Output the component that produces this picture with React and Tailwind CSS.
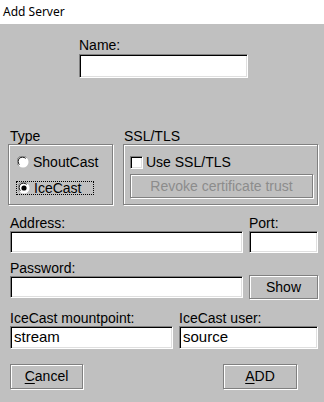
import React from 'react';

const sunken =
  'bg-white border border-t-[#808080] border-l-[#808080] border-r-white border-b-white shadow-[inset_1px_1px_0_#000,inset_-1px_-1px_0_#dfdfdf]';
const etched = 'border border-[#808080] shadow-[1px_1px_0_#fff,inset_1px_1px_0_#fff]';

const Label = ({ children, className = '' }) => (
  <div className={`h-[16px] leading-[16px] text-[14px] ${className}`}>{children}</div>
);

const Radio = ({ checked }) => (
  <svg width="12" height="12" viewBox="0 0 12 12" className="shrink-0">
    <circle cx="6" cy="6" r="5.5" fill="#fff" />
    <path d="M1.5 9.5 A5.5 5.5 0 0 1 9.5 1.5" stroke="#808080" strokeWidth="1" fill="none" />
    <path d="M2.4 8.6 A4.2 4.2 0 0 1 8.6 2.4" stroke="#000" strokeWidth="1" fill="none" />
    {checked && <circle cx="6" cy="6" r="2.6" fill="#000" />}
  </svg>
);

const Button = ({ children, className = '', disabled }) => (
  <div
    className={`${etched} bg-[#c0c0c0] flex items-center justify-center text-[14px] ${
      disabled ? 'text-[#8c8c8c]' : 'text-black'
    } ${className}`}
  >
    {children}
  </div>
);

export default function App() {
  return (
    <div className="w-[324px] h-[402px] flex flex-col" style={{ fontFamily: '"Liberation Sans", Arial, sans-serif' }}>
      <div
        className="h-[24px] bg-white flex items-center pl-[3px] text-[12px] text-black"
        style={{ fontFamily: '"Noto Sans", "DejaVu Sans", sans-serif' }}
      >
        Add Server
      </div>

      <div className="flex-1 bg-[#c0c0c0] text-black flex flex-col">
        {/* Name */}
        <div className="ml-[79px] mt-[13px] flex flex-col">
          <Label>Name:</Label>
          <div className={`${sunken} mt-[1px] w-[169px] h-[24px]`} />
        </div>

        {/* Type + SSL */}
        <div className="mt-[50px] flex gap-[10px] ml-[8px]">
          <div className="flex flex-col w-[105px]">
            <Label className="pl-[2px]">Type</Label>
            <div className={`${etched} h-[61px] flex flex-col pl-[8px]`}>
              <div className="mt-[10px] flex items-center gap-[4px] h-[14px]">
                <Radio />
                <span className="text-[14px] leading-[14px]">ShoutCast</span>
              </div>
              <div className="mt-[12px] flex items-center gap-[4px] h-[14px] w-[78px] border border-dotted border-black -ml-[1px] pl-[1px]">
                <Radio checked />
                <span className="text-[14px] leading-[14px]">IceCast</span>
              </div>
            </div>
          </div>

          <div className="flex flex-col w-[195px]">
            <Label className="pl-[1px]">SSL/TLS</Label>
            <div className={`${etched} h-[61px] flex flex-col pl-[6px]`}>
              <div className="mt-[10px] flex items-center gap-[3px] h-[14px]">
                <div className={`${sunken} w-[13px] h-[13px]`} />
                <span className="text-[14px] leading-[14px]">Use SSL/TLS</span>
              </div>
              <Button disabled className="mt-[5px] w-[183px] h-[24px]">
                Revoke certificate trust
              </Button>
            </div>
          </div>
        </div>

        {/* Address / Port */}
        <div className="mt-[10px] ml-[10px] flex gap-[6px]">
          <div className="flex flex-col">
            <Label>Address:</Label>
            <div className={`${sunken} w-[233px] h-[22px]`} />
          </div>
          <div className="flex flex-col">
            <Label>Port:</Label>
            <div className={`${sunken} w-[69px] h-[22px]`} />
          </div>
        </div>

        {/* Password */}
        <div className="mt-[7px] ml-[10px] flex flex-col">
          <Label>Password:</Label>
          <div className="flex gap-[6px] items-center h-[22px]">
            <div className={`${sunken} w-[233px] h-[22px]`} />
            <Button className="w-[69px] h-[24px] shrink-0">Show</Button>
          </div>
        </div>

        {/* IceCast */}
        <div className="mt-[12px] ml-[10px] flex gap-[6px]">
          <div className="flex flex-col">
            <Label>IceCast mountpoint:</Label>
            <div className={`${sunken} w-[163px] h-[23px] flex items-center pl-[3px] text-[15px]`}>stream</div>
          </div>
          <div className="flex flex-col">
            <Label>IceCast user:</Label>
            <div className={`${sunken} w-[139px] h-[23px] flex items-center pl-[3px] text-[15px]`}>source</div>
          </div>
        </div>

        {/* Buttons */}
        <div className="mt-[15px] ml-[10px] flex">
          <Button className="w-[73px] h-[25px]">
            <span>
              <span className="underline underline-offset-2">C</span>ancel
            </span>
          </Button>
          <Button className="ml-[140px] w-[74px] h-[25px]">
            <span>
              <span className="underline underline-offset-2">A</span>DD
            </span>
          </Button>
        </div>
      </div>
    </div>
  );
}
